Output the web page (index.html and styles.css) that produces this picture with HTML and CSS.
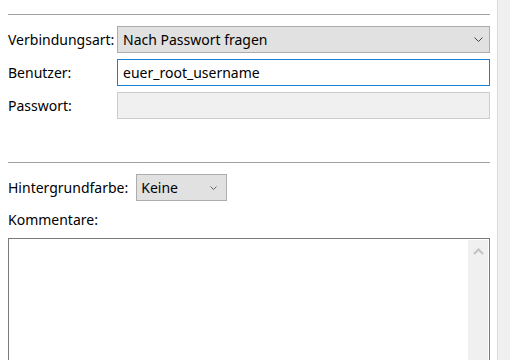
FILE: index.html
```html
<!DOCTYPE html>
<html lang="de">
<head>
    <meta charset="UTF-8">
    <title>Verbindung</title>
    <link rel="stylesheet" href="styles.css">
</head>
<body>
    <div class="window">
        <div class="panel">
            <hr class="divider first">

            <!-- Verbindung -->
            <div class="form-grid">
                <label class="field-label">Verbindungsart:</label>
                <div class="select wide">
                    <span>Nach Passwort fragen</span>
                    <svg class="chevron" width="9" height="5" viewBox="0 0 9 5"><path d="M0.5 0.5 L4.5 4.5 L8.5 0.5" fill="none" stroke="#444" stroke-width="1"/></svg>
                </div>

                <label class="field-label">Benutzer:</label>
                <div class="text-input user-input">euer_root_username</div>

                <label class="field-label">Passwort:</label>
                <div class="text-input disabled"></div>
            </div>

            <hr class="divider second">

            <div class="color-row">
                <label class="field-label">Hintergrundfarbe:</label>
                <div class="select small">
                    <span>Keine</span>
                    <svg class="chevron" width="7" height="4" viewBox="0 0 7 4"><path d="M0.5 0.5 L3.5 3.5 L6.5 0.5" fill="none" stroke="#666" stroke-width="1"/></svg>
                </div>
            </div>

            <div class="comment-label">Kommentare:</div>
            <div class="textarea">
                <div class="textarea-body"></div>
                <div class="textarea-scroll">
                    <svg width="11" height="7" viewBox="0 0 11 7"><path d="M1 6 L5.5 1.5 L10 6" fill="none" stroke="#c2c2c2" stroke-width="2"/></svg>
                </div>
            </div>
        </div>

        <!-- page scrollbar -->
        <div class="page-scroll"></div>
    </div>
</body>
</html>
```

FILE: styles.css
```css
/* General */
html, body {
    margin: 0;
    padding: 0;
    height: 100%;
    overflow: hidden;
}

body {
    font-family: "Noto Sans", "Open Sans", sans-serif;
    font-size: 14px;
    color: #000;
    background-color: #fff;
}

.window {
    display: flex;
    height: 100%;
}

.panel {
    flex: 1;
    padding: 0 7px 0 8px;
}

.page-scroll {
    width: 12px;
    border-left: 1px solid #dadada;
    background-color: #f0f0f0;
}

.divider {
    border: none;
    border-top: 1px solid #a0a0a0;
    margin: 0;
}

.divider.first {
    margin-top: 14px;
}

.divider.second {
    margin-top: 43px;
}

/* Connection fields */
.form-grid {
    display: grid;
    grid-template-columns: 109px 1fr;
    row-gap: 6px;
    align-items: center;
    margin-top: 11px;
}

.field-label {
    line-height: 27px;
}

.select {
    display: flex;
    align-items: center;
    justify-content: space-between;
    box-sizing: border-box;
    height: 27px;
    padding: 0 6px 0 5px;
    background-color: #e1e1e1;
    border: 1px solid #adadad;
}

.select.small {
    width: 91px;
    padding: 0 9px 0 4px;
}

.text-input {
    box-sizing: border-box;
    height: 27px;
    line-height: 25px;
    padding: 0 5px;
    border: 1px solid #cccccc;
    background-color: #fff;
}

.text-input.user-input {
    border: 1px solid #1a7fd4;
}

.text-input.disabled {
    background-color: #f0f0f0;
}

/* Background colour */
.color-row {
    display: flex;
    align-items: center;
    gap: 8px;
    margin-top: 11px;
}

.comment-label {
    margin-top: 9px;
    line-height: 20px;
}

.textarea {
    display: flex;
    margin-top: 8px;
    height: 140px;
    border: 1px solid #7a7a7a;
}

.textarea-body {
    flex: 1;
}

.textarea-scroll {
    width: 20px;
    margin-right: 1px;
    background-color: #f0f0f0;
    display: flex;
    justify-content: center;
    padding-top: 8px;
    margin-top: 1px;
}

.textarea-scroll svg {
    display: block;
}
```
